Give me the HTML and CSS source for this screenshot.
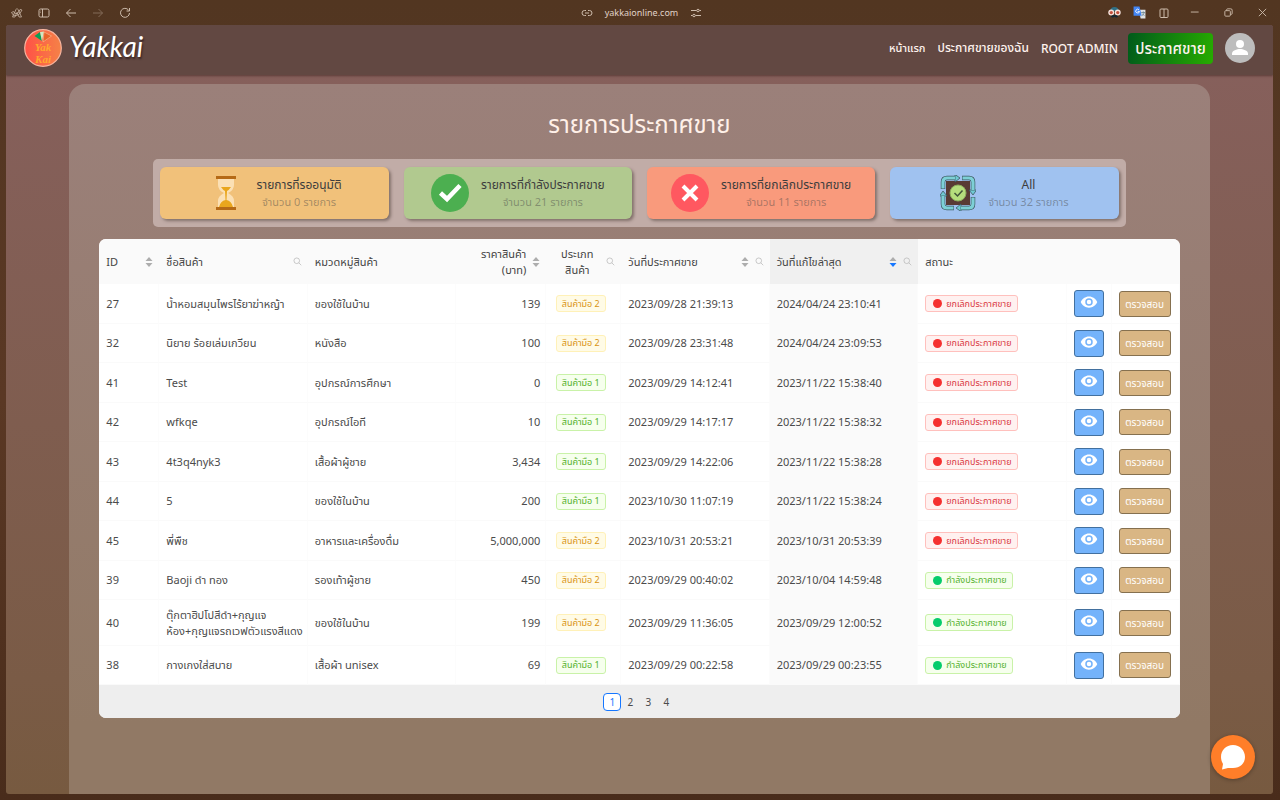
FILE: index.html
```html
<!DOCTYPE html>
<html lang="th">
<head>
<meta charset="utf-8">
<meta name="viewport" content="width=device-width, initial-scale=1">
<title>Yakkai - รายการประกาศขาย</title>
<link rel="stylesheet" href="styles.css">
</head>
<body>
<svg class="sprite" aria-hidden="true">
  <symbol id="i-search" viewBox="0 0 24 24"><circle cx="10" cy="10" r="7.5"/><path d="M15.5 15.5 22 22"/></symbol>
  <symbol id="i-eye" viewBox="0 0 24 24"><path fill-rule="evenodd" d="M12 4.5C7 4.500 2.730 7.610 1 12c1.730 4.390 6 7.500 11 7.500s9.270-3.110 11-7.500C21.270 7.610 17 4.500 12 4.500zM12 17a5 5 0 1 1 0-10 5 5 0 0 1 0 10zm0-8a3 3 0 1 0 0 6 3 3 0 0 0 0-6z"/></symbol>
  <symbol id="i-sort" viewBox="0 0 8 12"><path class="up" d="M4 1 7.500 5H.5z"/><path class="down" d="M4 11 .5 7h7z"/></symbol>
</svg>

<header class="chrome">
  <div class="chrome-group chrome-left">
    <button aria-label="Arc"><svg class="arc" viewBox="0 0 24 24"><path d="M3 20 10 5q2-4 4 0l7 15h-5l-4-9-4 9zM1 11q3 8 10 6 8-2 11-11M1 11l4-2q2 5 6 4 5-1 7-8l4 1"/></svg></button>
    <button aria-label="Sidebar"><svg viewBox="0 0 24 24"><rect x="2" y="4" width="20" height="16" rx="3"/><path d="M9 4v16M5 8h1M5 11h1"/></svg></button>
    <button aria-label="Back"><svg viewBox="0 0 24 24"><path d="M22 12H3m8-8-8 8 8 8"/></svg></button>
    <button aria-label="Forward" class="dim"><svg viewBox="0 0 24 24"><path d="M2 12h19m-8-8 8 8-8 8"/></svg></button>
    <button aria-label="Reload"><svg viewBox="0 0 24 24"><path d="M19 6a9 9 0 1 0 2 6M21 2v6h-6"/></svg></button>
  </div>
  <div class="chrome-group chrome-url">
    <svg viewBox="0 0 24 24"><path d="M10 7H7a5 5 0 0 0 0 10h3m4-10h3a5 5 0 0 1 0 10h-3M8 12h8"/></svg>
    <span>yakkaionline.com</span>
    <svg viewBox="0 0 24 24"><path d="M2 7h11m6 0h3M2 17h3m6 0h11"/><circle cx="16" cy="7" r="2.500"/><circle cx="8" cy="17" r="2.500"/></svg>
  </div>
  <div class="chrome-group chrome-right">
    <svg class="color-icon" viewBox="0 0 24 24"><path d="M4 9q1-7 8-7t8 7z" fill="#2f7187"/><circle cx="6" cy="12" r="5.500" fill="#f5e3dc"/><circle cx="18" cy="12" r="5.500" fill="#f5e3dc"/><circle cx="6" cy="12" r="3" fill="#c5503c"/><circle cx="18" cy="12" r="3" fill="#c5503c"/><path d="M5 20q3-5 7-3 4-2 7 3-4 2-7 0-3 2-7 0" fill="#122734"/></svg>
    <svg class="color-icon" viewBox="0 0 24 24"><path d="M11 7h12v16H14z" fill="#dfe2e6"/><path d="M1 1h11l4 17H1z" fill="#4285f4"/><path d="M11 7a3.500 3.500 0 1 0 1 3H8.500" fill="none" stroke="#fff" stroke-width="1.600"/><path d="M15 12h7m-3-2v2m2 0q-1 4-5 6m1-4 4 4" fill="none" stroke="#607d8b" stroke-width="1.400"/></svg>
    <button aria-label="Split view"><svg viewBox="0 0 24 24"><rect x="4" y="4" width="16" height="17" rx="2"/><path d="M12 4v17"/></svg></button>
    <button class="win" aria-label="Minimize"><svg viewBox="0 0 24 24"><path d="M4 11h17"/></svg></button>
    <button class="win" aria-label="Restore"><svg viewBox="0 0 24 24"><rect x="4" y="8" width="12" height="12" rx="2"/><path d="M8 8V6q0-2 2-2h7q3 0 3 3v7q0 2-2 2h-2"/></svg></button>
    <button class="win" aria-label="Close"><svg viewBox="0 0 24 24"><path d="m4 4 16 16M20 4 4 20"/></svg></button>
  </div>
</header>

<div class="page">
  <nav class="nav">
    <a class="brand" href="#">
      <svg class="logo" viewBox="0 0 38 38"><defs><linearGradient id="lg"><stop stop-color="#ff5146"/><stop offset="1" stop-color="#f58247"/></linearGradient></defs><circle cx="19" cy="19" r="18.300" fill="url(#lg)" stroke="#f7b5a0" stroke-width="1.200"/><path d="M10.500 7 16 3l2 9z" fill="#0b9f55"/><path d="m16 3 4-.5-2 9.500z" fill="#cfe8c4"/><path d="m20 3 7.500 4-8.500 6z" fill="#e8632a" stroke="#f5d0a0" stroke-width=".5"/><text x="19" y="22" text-anchor="middle" class="logo-text">Yak</text><text x="19" y="34" text-anchor="middle" class="logo-text">Kai</text></svg>
      <span class="brand-name">Yakkai</span>
    </a>
    <div class="links">
      <a class="small" href="#">หน้าแรก</a>
      <a href="#">ประกาศขายของฉัน</a>
      <a href="#">ROOT ADMIN</a>
      <button class="sell">ประกาศขาย</button>
      <button class="avatar" aria-label="บัญชี"><svg viewBox="0 0 30 30"><circle cx="15" cy="11" r="4"/><path d="M7 22v-1.500c0-3 5-4.500 8-4.500s8 1.500 8 4.500V22z"/></svg></button>
    </div>
  </nav>

  <main class="panel">
    <h1>รายการประกาศขาย</h1>
    <section class="stats">
      <button class="stat wait">
        <svg class="glass" viewBox="0 0 22 36"><path d="M3 3h16v7q0 5-6 8 6 3 6 8v7H3v-7q0-5 6-8-6-3-6-8z" fill="#fbe0b5"/><path d="M6 12h10q-2 3-4 4l-.500 9q5 1 6.500 7H4q1.500-6 6.500-7L10 16q-2-1-4-4z" fill="#e9a61d"/><path d="M1 1h20v3H1zm0 31h20v3H1z" fill="#b56a17"/></svg>
        <span><b>รายการที่รออนุมัติ</b><small>จำนวน 0 รายการ</small></span>
      </button>
      <button class="stat selling">
        <svg viewBox="0 0 38 38"><circle cx="19" cy="19" r="19" fill="#4caf50"/><path d="m9.500 19 6.500 6 13-13.500" fill="none" stroke="#fff" stroke-width="4.500"/></svg>
        <span><b>รายการที่กำลังประกาศขาย</b><small>จำนวน 21 รายการ</small></span>
      </button>
      <button class="stat cancelled">
        <svg viewBox="0 0 38 38"><circle cx="19" cy="19" r="19" fill="#ff5860"/><path d="m12 12 14 14m0-14L12 26" fill="none" stroke="#fff" stroke-width="4"/></svg>
        <span><b>รายการที่ยกเลิกประกาศขาย</b><small>จำนวน 11 รายการ</small></span>
      </button>
      <button class="stat all">
        <svg class="cycle" viewBox="0 0 36 36"><path d="M6 6h24v24H6z" fill="#593b34"/><g fill="none" stroke="#3f5962" stroke-width="4.500"><path id="arc" d="M3 14V7q0-4 4-4h8"/><use href="#arc" transform="rotate(90 18 18)"/><use href="#arc" transform="rotate(180 18 18)"/><use href="#arc" transform="rotate(270 18 18)"/></g><g fill="#6fcad3" stroke="#3f5962" stroke-width=".8"><path id="tip" d="m15-.5 5 3.500-5 4z"/><use href="#tip" transform="rotate(90 18 18)"/><use href="#tip" transform="rotate(180 18 18)"/><use href="#tip" transform="rotate(270 18 18)"/></g><g fill="none" stroke="#7dd0d6" stroke-width="3.200"><path id="in" d="M3 13.500V7q0-4 4-4h8"/><use href="#in" transform="rotate(90 18 18)"/><use href="#in" transform="rotate(180 18 18)"/><use href="#in" transform="rotate(270 18 18)"/></g><circle cx="18" cy="18" r="8" fill="#b5de7c" stroke="#8cae5d"/><path d="m14.500 18 3 3 5-5.500" fill="none" stroke="#42553a" stroke-width="1.500"/></svg>
        <span><b>All</b><small>จำนวน 32 รายการ</small></span>
      </button>
    </section>

    <section class="table-card">
      <table>
        <colgroup><col class="c-id"><col class="c-wide"><col class="c-wide"><col class="c-price"><col class="c-type"><col class="c-wide"><col class="c-wide"><col class="c-wide"><col class="c-eye"><col class="c-check"></colgroup>
        <thead><tr>
          <th><div class="th"><span>ID</span><svg class="sort"><use href="#i-sort"/></svg></div></th>
          <th><div class="th"><span>ชื่อสินค้า</span><svg class="search"><use href="#i-search"/></svg></div></th>
          <th>หมวดหมู่สินค้า</th>
          <th class="num"><div class="th"><span>ราคาสินค้า (บาท)</span><svg class="sort"><use href="#i-sort"/></svg></div></th>
          <th class="mid"><div class="th"><span>ประเภท<br>สินค้า</span><svg class="search"><use href="#i-search"/></svg></div></th>
          <th><div class="th"><span>วันที่ประกาศขาย</span><svg class="sort"><use href="#i-sort"/></svg><svg class="search"><use href="#i-search"/></svg></div></th>
          <th class="sorted"><div class="th"><span>วันที่แก้ไขล่าสุด</span><svg class="sort"><use href="#i-sort"/></svg><svg class="search"><use href="#i-search"/></svg></div></th>
          <th>สถานะ</th><th></th><th></th>
        </tr></thead>
        <tbody>
          <tr><td>27</td><td>น้ำหอมสมุนไพรไร้ยาฆ่าหญ้า</td><td>ของใช้ในบ้าน</td><td class="num">139</td><td class="mid"><span class="tag gold">สินค้ามือ 2</span></td><td>2023/09/28 21:39:13</td><td class="sorted">2024/04/24 23:10:41</td><td><span class="tag red">ยกเลิกประกาศขาย</span></td><td><button class="eye" aria-label="ดู"><svg><use href="#i-eye"/></svg></button></td><td><button class="check">ตรวจสอบ</button></td></tr>
          <tr><td>32</td><td>นิยาย ร้อยเล่มเกวียน</td><td>หนังสือ</td><td class="num">100</td><td class="mid"><span class="tag gold">สินค้ามือ 2</span></td><td>2023/09/28 23:31:48</td><td class="sorted">2024/04/24 23:09:53</td><td><span class="tag red">ยกเลิกประกาศขาย</span></td><td><button class="eye" aria-label="ดู"><svg><use href="#i-eye"/></svg></button></td><td><button class="check">ตรวจสอบ</button></td></tr>
          <tr><td>41</td><td>Test</td><td>อุปกรณ์การศึกษา</td><td class="num">0</td><td class="mid"><span class="tag green">สินค้ามือ 1</span></td><td>2023/09/29 14:12:41</td><td class="sorted">2023/11/22 15:38:40</td><td><span class="tag red">ยกเลิกประกาศขาย</span></td><td><button class="eye" aria-label="ดู"><svg><use href="#i-eye"/></svg></button></td><td><button class="check">ตรวจสอบ</button></td></tr>
          <tr><td>42</td><td>wfkqe</td><td>อุปกรณ์ไอที</td><td class="num">10</td><td class="mid"><span class="tag green">สินค้ามือ 1</span></td><td>2023/09/29 14:17:17</td><td class="sorted">2023/11/22 15:38:32</td><td><span class="tag red">ยกเลิกประกาศขาย</span></td><td><button class="eye" aria-label="ดู"><svg><use href="#i-eye"/></svg></button></td><td><button class="check">ตรวจสอบ</button></td></tr>
          <tr><td>43</td><td>4t3q4nyk3</td><td>เสื้อผ้าผู้ชาย</td><td class="num">3,434</td><td class="mid"><span class="tag green">สินค้ามือ 1</span></td><td>2023/09/29 14:22:06</td><td class="sorted">2023/11/22 15:38:28</td><td><span class="tag red">ยกเลิกประกาศขาย</span></td><td><button class="eye" aria-label="ดู"><svg><use href="#i-eye"/></svg></button></td><td><button class="check">ตรวจสอบ</button></td></tr>
          <tr><td>44</td><td>5</td><td>ของใช้ในบ้าน</td><td class="num">200</td><td class="mid"><span class="tag green">สินค้ามือ 1</span></td><td>2023/10/30 11:07:19</td><td class="sorted">2023/11/22 15:38:24</td><td><span class="tag red">ยกเลิกประกาศขาย</span></td><td><button class="eye" aria-label="ดู"><svg><use href="#i-eye"/></svg></button></td><td><button class="check">ตรวจสอบ</button></td></tr>
          <tr><td>45</td><td>พี่พืช</td><td>อาหารและเครื่องดื่ม</td><td class="num">5,000,000</td><td class="mid"><span class="tag gold">สินค้ามือ 2</span></td><td>2023/10/31 20:53:21</td><td class="sorted">2023/10/31 20:53:39</td><td><span class="tag red">ยกเลิกประกาศขาย</span></td><td><button class="eye" aria-label="ดู"><svg><use href="#i-eye"/></svg></button></td><td><button class="check">ตรวจสอบ</button></td></tr>
          <tr><td>39</td><td>Baoji ดำ ทอง</td><td>รองเท้าผู้ชาย</td><td class="num">450</td><td class="mid"><span class="tag gold">สินค้ามือ 2</span></td><td>2023/09/29 00:40:02</td><td class="sorted">2023/10/04 14:59:48</td><td><span class="tag green dot">กำลังประกาศขาย</span></td><td><button class="eye" aria-label="ดู"><svg><use href="#i-eye"/></svg></button></td><td><button class="check">ตรวจสอบ</button></td></tr>
          <tr><td>40</td><td>ตุ๊กตาฮิปโปสีดำ+กุญแจ<br>ห้อง+กุญแจรถเวฟตัวแรงสีแดง</td><td>ของใช้ในบ้าน</td><td class="num">199</td><td class="mid"><span class="tag gold">สินค้ามือ 2</span></td><td>2023/09/29 11:36:05</td><td class="sorted">2023/09/29 12:00:52</td><td><span class="tag green dot">กำลังประกาศขาย</span></td><td><button class="eye" aria-label="ดู"><svg><use href="#i-eye"/></svg></button></td><td><button class="check">ตรวจสอบ</button></td></tr>
          <tr><td>38</td><td>กางเกงใส่สบาย</td><td>เสื้อผ้า unisex</td><td class="num">69</td><td class="mid"><span class="tag green">สินค้ามือ 1</span></td><td>2023/09/29 00:22:58</td><td class="sorted">2023/09/29 00:23:55</td><td><span class="tag green dot">กำลังประกาศขาย</span></td><td><button class="eye" aria-label="ดู"><svg><use href="#i-eye"/></svg></button></td><td><button class="check">ตรวจสอบ</button></td></tr>
        </tbody>
      </table>
      <nav class="pager" aria-label="หน้า"><button class="current">1</button><button>2</button><button>3</button><button>4</button></nav>
    </section>
  </main>
  <button class="chat" aria-label="แชท"><svg viewBox="0 0 26 26"><path d="M13 1C6 1 1 6 1 13c0 3 1 5 2 7l-1 5.500 6-1.500h5c7 0 12-4.500 12-11S20 1 13 1z"/></svg></button>
</div>
</body>
</html>
```
FILE: styles.css
```css
* { box-sizing: border-box; }
body {
  margin: 0;
  min-height: 100vh;
  display: flex;
  flex-direction: column;
  padding: 0 7px 6px 6px;
  background: linear-gradient(#523621, #5a3824 50%, #492c1b);
  font-family: "Noto Sans", "Noto Sans Thai", sans-serif;
  font-size: 11px;
  color: #4b4b4b;
}
button { font: inherit; color: inherit; border: 0; background: none; padding: 0; cursor: pointer; }
a { color: inherit; text-decoration: none; }
svg { display: block; }
.sprite { display: none; }

.chrome {
  height: 25px;
  display: grid;
  grid-template-columns: 1fr auto 1fr;
  align-items: center;
  color: #cdbbab;
  font-size: 9px;
}
.chrome-group { display: flex; align-items: center; }
.chrome svg { width: 12px; height: 12px; fill: none; stroke: currentColor; stroke-width: 2; }
.chrome .color-icon { stroke: none; width: 13px; height: 13px; }
.chrome .arc { stroke-width: 1.5; }
.chrome-left { gap: 15px; padding-left: 5px; }
.chrome-url { gap: 12px; padding-left: 4px; }
.chrome-url span { color: #e0d3c8; }
.chrome-right { justify-content: flex-end; gap: 12px; padding-right: 5px; }
.chrome-right .win { margin-left: 7px; }
.chrome-right .win + .win { margin-left: 11px; }
.chrome-right .win svg { width: 11px; height: 11px; }
.dim { opacity: 0.4; }

.page {
  flex: 1;
  display: flex;
  flex-direction: column;
  border-radius: 3px;
  overflow: hidden;
  background: linear-gradient(#87605d, #7a5b46 85%, #775a40);
}
.nav {
  height: 50px;
  display: flex;
  align-items: center;
  justify-content: space-between;
  padding: 0 18px 4px;
  background: #624842;
  box-shadow: 0 1px 2px rgba(50, 25, 20, 0.5);
  color: #fff3ee;
}
.brand { display: flex; align-items: center; gap: 7px; }
.logo { width: 38px; height: 38px; }
.logo-text { font: italic bold 11px/1 "Liberation Serif", serif; fill: #ffa92e; }
.brand-name { padding-bottom: 4px; font: italic 28px/32px Lato, sans-serif; color: #fff; text-shadow: 1px 2px 2px rgba(30, 10, 10, 0.6); }
.links { display: flex; align-items: center; gap: 12px; font-size: 12px; font-weight: 500; }
.links .small { font-size: 11px; }
.sell {
  height: 31px;
  width: 85px;
  margin-left: -2px;
  border-radius: 4px;
  background: linear-gradient(100deg, #005a1b, #27ac00);
  font-size: 15px;
  line-height: 20px;
}
.avatar { width: 30px; height: 30px; border-radius: 50%; background: #bdbdbd; }
.avatar svg { fill: #fff; }

.panel {
  flex: 1;
  width: 90%;
  margin: 9px auto 0;
  padding: 23px 30px;
  border-radius: 16px 16px 0 0;
  background: linear-gradient(#9b807a, #917965 90%);
}
h1 { margin: 0; color: #fff0e8; font-size: 24px; line-height: 34px; font-weight: 400; text-align: center; }
.stats {
  width: 90%;
  margin: 18px auto 12px;
  padding: 8px 7px;
  display: grid;
  grid-template-columns: repeat(4, 1fr);
  gap: 15px;
  border-radius: 5px;
  background: #c1aca7;
}
.stat {
  height: 52px;
  display: flex;
  align-items: center;
  justify-content: center;
  gap: 12px;
  border-radius: 6px;
  box-shadow: 2px 2px 3px rgba(70, 55, 50, 0.5);
}
.stat svg { width: 38px; height: 38px; }
.stat .glass { width: 22px; height: 36px; margin: 0 7px 0 8px; }
.stat .cycle { width: 36px; height: 36px; }
.stat b, .stat small { display: block; line-height: 17px; font-weight: 400; }
.stat b { font-size: 12px; color: #3d3d3d; }
.stat small { font-size: 11px; color: rgba(70, 70, 70, 0.45); }
.wait { background: #f1c17a; }
.selling { background: #b1c98f; }
.cancelled { background: #f99a7c; }
.all { background: #a0c2f0; }

.table-card { border-radius: 7px; overflow: hidden; background: #fff; }
table { width: 100%; table-layout: fixed; border-collapse: separate; border-spacing: 0; line-height: 16px; }
.c-id { width: 60px; }
.c-price { width: 90px; }
.c-type { width: 75px; }
.c-eye { width: 45px; }
.c-check { width: 68px; }
th { height: 45px; padding: 0 6px 0 7px; background: #fafafa; font-weight: 400; text-align: left; color: #444; }
td { height: 40px; padding: 0 0 0 7px; border-bottom: 1px solid #fafafa; border-right: 1px solid #fcfcfc; white-space: nowrap; }
tr:nth-child(even) td { height: 39px; }
tr:nth-child(9) td { height: 46px; }
.th { display: flex; align-items: center; gap: 6px; }
.th span { flex: 1; }
.num { text-align: right; }
td.num { padding-right: 5px; }
.mid { text-align: center; }
td.mid { padding: 0 5px 0 0; }
.mid .th { gap: 2px; }
th.mid { padding-left: 4px; }
th.sorted { background: #f0f0f0; }
td.sorted { background: #fafafa; }
.sort { width: 8px; height: 12px; fill: #adadad; color: #adadad; }
.sorted .sort { color: #1677ff; }
.down { fill: currentColor; }
.search { width: 9px; height: 9px; fill: none; stroke: #b8b8b8; stroke-width: 2; }
.tag { display: inline-flex; align-items: center; gap: 4px; height: 17px; padding: 0 5px; border: 1px solid; border-radius: 3px; font-size: 9px; vertical-align: middle; }
.gold { color: #d99413; background: #fffbe6; border-color: #fff1b8; }
.green { color: #52b02a; background: #f6ffed; border-color: #c9f2a8; }
.red { color: #d9363e; background: #fff1f0; border-color: #ffc0bd; }
.red::before, .dot::before { content: ""; width: 9px; height: 9px; margin-left: 2px; border-radius: 50%; background: #f5302f; }
.dot::before { background: #06cc6b; }
.eye, .check { display: block; border: 1px solid; border-radius: 3px; }
.eye { width: 30px; height: 27px; background: #74b3fb; border-color: #42709f; }
.eye svg { width: 18px; height: 18px; margin: -3px auto 0; fill: #fff; }
.check { width: 52px; height: 26px; background: #d9b684; border-color: #85704f; color: #fff; font-size: 10px; }

.pager { height: 33px; display: flex; align-items: center; justify-content: center; background: #eee; }
.pager button { width: 18px; height: 18px; font-size: 10px; line-height: 16px; }
.pager .current { border: 1px solid #1677ff; border-radius: 4px; background: #fff; color: #1677ff; }
.chat {
  position: fixed;
  right: 25px;
  bottom: 21px;
  width: 44px;
  height: 44px;
  border-radius: 50%;
  background: #ff7e29;
  box-shadow: 0 1px 4px rgba(0, 0, 0, 0.3);
}
.chat svg { width: 26px; height: 26px; margin: auto; fill: #fff; }
```
